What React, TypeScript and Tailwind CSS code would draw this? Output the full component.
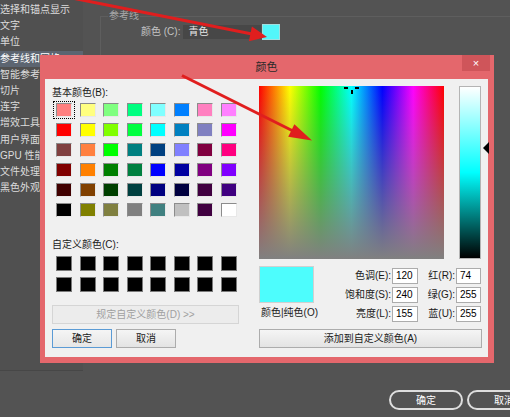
import React from "react"

const sidebarItems = [
  "选择和锚点显示",
  "文字",
  "单位",
  "参考线和网格",
  "智能参考线",
  "切片",
  "连字",
  "增效工具和暂存盘",
  "用户界面",
  "GPU 性能",
  "文件处理和剪贴板",
  "黑色外观",
]

const basicColors = [
  ["#ff8080", "#ffff80", "#80ff80", "#00ff80", "#80ffff", "#0080ff", "#ff80c0", "#ff80ff"],
  ["#ff0000", "#ffff00", "#80ff00", "#00ff40", "#00ffff", "#0080c0", "#8080c0", "#ff00ff"],
  ["#804040", "#ff8040", "#00ff00", "#008080", "#004080", "#8080ff", "#800040", "#ff0080"],
  ["#800000", "#ff8000", "#008000", "#008040", "#0000ff", "#0000a0", "#800080", "#8000ff"],
  ["#400000", "#804000", "#004000", "#004040", "#000080", "#000040", "#400040", "#400080"],
  ["#000000", "#808000", "#808040", "#808080", "#408080", "#c0c0c0", "#400040", "#ffffff"],
]

const font = "font-['Liberation_Sans','Noto_Sans_CJK_SC',sans-serif]"

function Swatch({ color, focused }: { color: string; focused?: boolean }) {
  return (
    <div className="h-[20px] w-[23.5px] relative">
      {focused && (
        <div className="absolute left-[-3px] top-[-2px] w-[22px] h-[18px] border border-dotted border-black" />
      )}
      <div
        className="w-[16px] h-[14px] border border-t-[#8c8c8c] border-l-[#8c8c8c] border-r-[#e8e8e8] border-b-[#e8e8e8]"
        style={{ backgroundColor: color }}
      />
    </div>
  )
}

function Field({ label, value, labelWidth, inputWidth }: { label: string; value: string; labelWidth: string; inputWidth: string }) {
  return (
    <div className="flex items-center h-[16px]">
      <span className={`${labelWidth} text-right pr-[1px] text-[10px] leading-[12px] text-[#1a1a1a]`}>{label}</span>
      <div className={`${inputWidth} h-[16px] bg-white border border-[#acacac] text-[10px] leading-[14px] pl-[3px] text-black`}>
        {value}
      </div>
    </div>
  )
}

function ColorDialog() {
  return (
    <div className={`absolute left-[40px] top-[55px] w-[454px] h-[308px] bg-[#e4676c] flex flex-col pl-[5px] pr-[6px] pb-[6px] ${font}`}>
      <div className="h-[24px] relative flex items-center justify-center">
        <span className="text-[11px] text-[#2a2a2a] leading-none">颜色</span>
        <div className="absolute right-[-2px] top-0 w-[28px] h-[16px] bg-[#cf555a] flex items-center justify-center text-white text-[11px] leading-none">
          ×
        </div>
      </div>
      <div className="flex-1 bg-[#f0f0f0] flex pl-[7px]">
        {/* left column */}
        <div className="w-[187px] flex flex-col pt-[8px]">
          <span className="text-[10px] leading-[12px] text-[#1a1a1a]">基本颜色(B):</span>
          <div className="ml-[4px] mt-[4px] grid grid-cols-[repeat(8,23.5px)]">
            {basicColors.flat().map((c, i) => (
              <Swatch key={i} color={c} focused={i === 0} />
            ))}
          </div>
          <span className="mt-[16px] text-[10px] leading-[12px] text-[#1a1a1a]">自定义颜色(C):</span>
          <div className="ml-[4px] mt-[5px] grid grid-cols-[repeat(8,23.5px)] auto-rows-[21px]">
            {Array.from({ length: 16 }).map((_, i) => (
              <div key={i} className="w-[16px] h-[15px] bg-black border border-[#7a7a7a]" />
            ))}
          </div>
          <div className="mt-[7px] h-[19px] w-[187px] border border-[#d5d5d5] bg-[#ececec] flex items-center justify-center text-[10px] text-[#a0a0a0]">
            规定自定义颜色(D) &gt;&gt;
          </div>
          <div className="mt-[5px] flex gap-[4px]">
            <div className="w-[60px] h-[19px] border border-[#5b9bd5] bg-[linear-gradient(to_bottom,#f5f5f5,#e6e6e6)] flex items-center justify-center text-[10px] text-[#1a1a1a]">
              确定
            </div>
            <div className="w-[60px] h-[19px] border border-[#acacac] bg-[linear-gradient(to_bottom,#f5f5f5,#e3e3e3)] flex items-center justify-center text-[10px] text-[#1a1a1a]">
              取消
            </div>
          </div>
        </div>

        {/* right column */}
        <div className="ml-[20px] flex flex-col pt-[7px]">
          <div className="flex">
            <div className="relative w-[185px] h-[173px] bg-[linear-gradient(to_right,#ff0000,#ffff00,#00ff00,#00ffff,#0000ff,#ff00ff,#ff0000)]">
              <div className="absolute inset-0 bg-[linear-gradient(to_bottom,rgba(128,128,128,0),#808080)]" />
              <div className="absolute left-[85px] top-[1px] w-[4px] h-[1.5px] bg-black" />
              <div className="absolute left-[96px] top-[1px] w-[4px] h-[1.5px] bg-black" />
              <div className="absolute left-[92px] top-[4px] w-[1.5px] h-[4px] bg-black" />
            </div>
            <div className="relative ml-[15px] w-[22px] h-[173px] border border-[#b4b4b4] bg-[linear-gradient(to_bottom,#ffffff,#00ffff_50%,#000000)]">
              <div className="absolute left-[23px] top-[55px] w-0 h-0 border-y-[6px] border-y-transparent border-r-[6px] border-r-black" />
            </div>
          </div>
          <div className="mt-[7px] h-[58px] flex">
            <div className="w-[60px] flex flex-col">
              <div className="w-[55px] h-[37px] bg-[#4dfdfd] border border-[#d0d0d0]" />
              <span className="mt-[4px] text-[10px] leading-[12px] text-[#1a1a1a] pl-[2px]">颜色|纯色(O)</span>
            </div>
            <div className="mt-[2px] flex flex-col gap-[3px]">
              <Field label="色调(E):" value="120" labelWidth="w-[73px]" inputWidth="w-[26px]" />
              <Field label="饱和度(S):" value="240" labelWidth="w-[73px]" inputWidth="w-[26px]" />
              <Field label="亮度(L):" value="155" labelWidth="w-[73px]" inputWidth="w-[26px]" />
            </div>
            <div className="mt-[2px] flex flex-col gap-[3px]">
              <Field label="红(R):" value="74" labelWidth="w-[38px]" inputWidth="w-[25px]" />
              <Field label="绿(G):" value="255" labelWidth="w-[38px]" inputWidth="w-[25px]" />
              <Field label="蓝(U):" value="255" labelWidth="w-[38px]" inputWidth="w-[25px]" />
            </div>
          </div>
          <div className="mt-[5px] w-[223px] h-[19px] border border-[#acacac] bg-[linear-gradient(to_bottom,#f5f5f5,#e3e3e3)] flex items-center justify-center text-[10px] text-[#1a1a1a]">
            添加到自定义颜色(A)
          </div>
        </div>
      </div>
    </div>
  )
}

function Arrows() {
  return (
    <svg className="absolute inset-0 pointer-events-none" width="510" height="417" viewBox="0 0 510 417">
      <line x1="72" y1="-2" x2="252" y2="34" stroke="#e01e1e" strokeWidth="3" />
      <polygon points="267,37 248.9,41.2 251.9,26.6" fill="#e01e1e" />
      <line x1="182" y1="75.5" x2="295" y2="132" stroke="#e01e1e" strokeWidth="3" />
      <polygon points="312,140.5 294.4,124.2 288.2,136.8" fill="#e01e1e" />
    </svg>
  )
}

export default function App() {
  return (
    <div className={`relative w-[510px] h-[417px] overflow-hidden bg-[#535353] ${font}`}>
      <div className="flex h-full">
        <div className="w-[83px] h-[371px] shrink-0 bg-[#505050] border-b border-[#474747] pt-[2px] overflow-hidden">
          {sidebarItems.map((item, i) => (
            <div
              key={item}
              className={`h-[16.2px] flex items-center whitespace-nowrap text-[10px] leading-none ${
                i === 3 ? "bg-[#5c6571] text-white" : "text-[#dcdcdc]"
              }`}
            >
              <span>{item}</span>
            </div>
          ))}
        </div>
        <div className="flex-1 pl-[17px] pt-[16px]">
          <div className="border-t border-l border-[#5e5e5e] h-[330px]">
            <div className="-mt-[7px] ml-[7px] w-fit px-[1px] bg-[#535353] text-[10px] leading-[12px] text-[#a8a8a8]">
              参考线
            </div>
            <div className="mt-[2px] ml-[40px] flex items-center h-[16px]">
              <span className="text-[10px] text-[#c4c4c4] leading-none">颜色 (C):</span>
              <div className="ml-[3px] w-[78px] h-[14px] bg-[#474747] flex items-center pl-[5px] text-[10px] text-[#e8e8e8] leading-none">
                青色
              </div>
              <div className="ml-[1px] w-[18px] h-[16px] bg-[#52f6fa] border border-[#9fdfe0]" />
            </div>
          </div>
        </div>
      </div>
      <div className="absolute left-[389px] top-[390px] flex gap-[4px]">
        <div className="w-[74px] h-[20px] rounded-full border-2 border-[#dedede] flex items-center justify-center text-[10px] text-white">
          确定
        </div>
        <div className="w-[74px] h-[20px] rounded-full border-2 border-[#dedede] flex items-center justify-center text-[10px] text-white">
          取消
        </div>
      </div>
      <ColorDialog />
      <Arrows />
    </div>
  )
}
